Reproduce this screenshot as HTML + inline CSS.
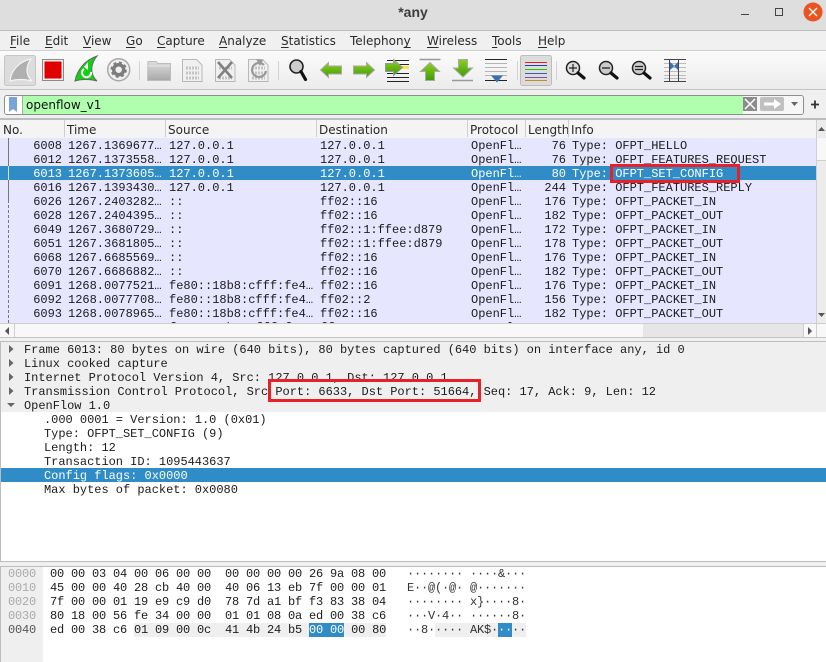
<!DOCTYPE html>
<html><head><meta charset="utf-8"><style>
html,body{margin:0;padding:0;width:826px;height:662px;overflow:hidden;background:#fff}
div,span{position:absolute;white-space:pre}
.m{font:12px/14px "Liberation Mono",monospace;color:#1c1c1c}
.s{font:12px/16px "DejaVu Sans",sans-serif;color:#2a2a2a}
u{text-underline-offset:2px}
.r{left:0;width:816px;height:14px;background:#e7e6ff;overflow:hidden}
.r span{top:1px}
.n{right:754px}.l{right:250px}
.t{left:68px}.a{left:169px}.b{left:320px}.p{left:471px}.i{left:572px}
.sel{background:#308cc6}.sel span{color:#fff}
.d{left:24px;height:14px;letter-spacing:-.02px;margin-top:1px}
.h{left:50px;letter-spacing:-.2px}
.o{left:8px;letter-spacing:-.2px;color:#aaa}
.c{left:407px;letter-spacing:-.2px;color:#333}
.hd{top:122px}
.sp{top:120px;width:1px;height:17px;background:#cfcfcf}
</style></head><body>
<!-- title bar -->
<div style="left:0;top:0;width:826px;height:30px;background:#dedede"></div>
<div style="left:0;top:30px;width:826px;height:1px;background:#bdbdbd"></div>
<div style="left:0;top:3px;width:826px;text-align:center;font:bold 14px/18px 'Liberation Sans',sans-serif;color:#3c3c3c">*any</div>
<svg style="position:absolute;left:730px;top:0" width="96" height="30"><path d="M11 14.500h8" stroke="#444" stroke-width="1"/><rect x="45.500" y="8.500" width="7" height="7" fill="none" stroke="#444"/><circle cx="83" cy="12" r="9.500" fill="#e95420"/><path d="M79 8l8 8M87 8l-8 8" stroke="#fff" stroke-width="1.300"/></svg>
<!-- menu -->
<div style="left:0;top:31px;width:826px;height:19px;background:#f0f0f0"></div>
<div style="left:0;top:50px;width:826px;height:1px;background:#d0d0d0"></div>
<div class="s" style="left:10px;top:33px"><u>F</u>ile</div>
<div class="s" style="left:45px;top:33px"><u>E</u>dit</div>
<div class="s" style="left:83px;top:33px"><u>V</u>iew</div>
<div class="s" style="left:126px;top:33px"><u>G</u>o</div>
<div class="s" style="left:157px;top:33px"><u>C</u>apture</div>
<div class="s" style="left:219px;top:33px"><u>A</u>nalyze</div>
<div class="s" style="left:281px;top:33px"><u>S</u>tatistics</div>
<div class="s" style="left:350px;top:33px">Telephon<u>y</u></div>
<div class="s" style="left:427px;top:33px"><u>W</u>ireless</div>
<div class="s" style="left:492px;top:33px"><u>T</u>ools</div>
<div class="s" style="left:538px;top:33px"><u>H</u>elp</div>
<!-- toolbar -->
<div style="left:0;top:51px;width:826px;height:38px;background:linear-gradient(#fbfbfb,#ececec)"></div>
<div style="left:0;top:89px;width:826px;height:1px;background:#c4c4c4"></div>
<svg style="position:absolute;left:0;top:51px" width="826" height="39" viewBox="0 51 826 39">
<defs>
<linearGradient id="g" x1="0" y1="0" x2="0" y2="1"><stop offset="0" stop-color="#8fd020"/><stop offset="1" stop-color="#3f9a08"/></linearGradient>
<linearGradient id="f" x1="0" y1="0" x2="0" y2="1"><stop offset="0" stop-color="#dcdcdc"/><stop offset="1" stop-color="#a8a8a8"/></linearGradient>
</defs>
<rect x="4.500" y="55.500" width="31" height="30" rx="2" fill="#dcdcdc" stroke="#c6c6c6"/>
<path d="M10 81C11 70 20 61 31 59C26 66 25 75 32 81C25 79 16 79 10 81Z" fill="#b0b0b0" stroke="#f4f4f4" stroke-width="1.200"/>
<rect x="42.500" y="59.500" width="21" height="21" fill="#eee" stroke="#8a8a8a"/>
<rect x="44.500" y="61.500" width="17" height="17" fill="#e00000"/>
<path d="M75 81C77 70 85 60 97 56C91 63 89 74 97 81C90 79 81 79 75 81Z" fill="#12d012" stroke="#666" stroke-width="1"/>
<path d="M91 72a4.500 4.500 0 1 1-7-3" fill="none" stroke="#fff" stroke-width="2"/><path d="M88 62v8l-4-3z" fill="#fff"/>
<circle cx="118.700" cy="69.700" r="11" fill="#f0f0f0" stroke="#a8a8a8" stroke-width="1.500"/>
<circle cx="118.700" cy="69.700" r="5" fill="none" stroke="#7c7c7c" stroke-width="3.500"/>
<circle cx="118.700" cy="69.700" r="7.200" fill="none" stroke="#7c7c7c" stroke-width="2" stroke-dasharray="3 2.650"/>
<path d="M139.500 61v19M278.500 61v19M517.500 61v19M556.500 61v19" stroke="#d2d2d2"/>
<path d="M148 61.500h8l2 2h12.500v17h-23z" fill="url(#f)" stroke="#bdbdbd"/><path d="M148 66h22" stroke="#e6e6e6"/>
<g fill="#f0f0f0" stroke="#b8b8b8"><path d="M182.500 59.500h14l5.500 5.500v16.500h-19.500z"/><path d="M215.500 59.500h14l5.500 5.500v16.500h-19.500z"/><path d="M248.500 59.500h14l5.500 5.500v16.500h-19.500z"/></g>
<g stroke="#c4c4c4" stroke-width="3" stroke-dasharray="2 1" fill="none"><path d="M186 68h13M186 73h13M186 78h13M219 68h13M219 78h13M252 68h13M252 73h13M252 78h13"/></g>
<path d="M218 62l14 16M232 62l-14 16" stroke="#808080" stroke-width="2.600"/>
<path d="M264 65a7 7 0 1 0 2 6" fill="none" stroke="#999" stroke-width="2.200"/><path d="M256 59l7 1-3 6z" fill="#999"/>
<circle cx="296.500" cy="66.500" r="6.500" fill="#ccc" stroke="#222" stroke-width="1.600"/>
<path d="M301 71.500l4.500 8" stroke="#111" stroke-width="3.200" stroke-linecap="round"/>
<path d="M320.500 70l8-7.500v3.500h13v8h-13v3.500z" fill="url(#g)" stroke="#aaa"/>
<path d="M374.500 70l-8-7.500v3.500h-13v8h13v3.500z" fill="url(#g)" stroke="#aaa"/>
<path d="M387 60.500h22M399 64.500h10M387 73.500h22M387 77.500h22M387 81.500h22" stroke="#222" stroke-width="1"/><path d="M402 66h7v3h-7z" fill="#fde04a"/>
<path d="M385.500 63.500h8v-4l9 8-9 8v-4h-8z" fill="url(#g)" stroke="#999"/>
<path d="M419.500 59.500h21" stroke="#999" stroke-width="1.500"/>
<path d="M430 62.500l9.500 9h-5v9h-9v-9h-5z" fill="url(#g)" stroke="#aaa"/>
<path d="M452 80.500h21" stroke="#999" stroke-width="1.500"/>
<path d="M463 77l9.500-9h-5v-8.500h-9v8.500h-5z" fill="url(#g)" stroke="#aaa"/>
<path d="M485 59.500h22" stroke="#222"/><path d="M485 63.500h22M485 67.500h22M485 71.500h22M485 75.500h22" stroke="#b4b4b4"/><path d="M485 80.500h22" stroke="#222"/>
<path d="M491 75.500h12l-6 7z" fill="#3c6fb4"/>
<rect x="520.500" y="55.500" width="31" height="30" rx="2" fill="#dcdcdc" stroke="#bdbdbd"/>
<path d="M525 62.500h22" stroke="#e02020"/><path d="M525 65.500h22" stroke="#2040c0"/><path d="M525 69.500h22" stroke="#30c000"/><path d="M525 73.500h22" stroke="#3060b0"/><path d="M525 77.500h22" stroke="#8a4aa0"/><path d="M525 80.500h22" stroke="#c09020"/>
<circle cx="573" cy="68" r="6.500" fill="#ddd" stroke="#222" stroke-width="1.500"/><path d="M578 73l6 5" stroke="#111" stroke-width="3.200" stroke-linecap="round"/>
<path d="M569 68h8M573 64v8" stroke="#222" stroke-width="1.200"/>
<circle cx="606" cy="68" r="6.500" fill="#ccc" stroke="#222" stroke-width="1.500"/><path d="M611 73l6 5" stroke="#111" stroke-width="3.200" stroke-linecap="round"/><path d="M602 68h8" stroke="#222" stroke-width="1.300"/>
<circle cx="639" cy="68" r="6.500" fill="#ccc" stroke="#222" stroke-width="1.500"/><path d="M644 73l6 5" stroke="#111" stroke-width="3.200" stroke-linecap="round"/><path d="M635 66.500h8M635 69.500h8" stroke="#222" stroke-width="1.200"/>
<path d="M664 59.500h22M664 81.500h22" stroke="#444"/><path d="M664 63.500h22M664 67.500h22M664 71.500h22M664 75.500h22M664 78.500h22" stroke="#bbb"/>
<path d="M669.500 59v22M678.500 59v22" stroke="#444"/>
<path d="M670 62l4.500 4-4.500 4zM678 62l-4 4 4 4z" fill="#3c6fb4"/>
</svg>
<!-- filter bar -->
<div style="left:0;top:90px;width:826px;height:28px;background:#f0f0f0"></div>
<div style="left:0;top:118px;width:826px;height:2px;background:#bdbdbd"></div>
<div style="left:4px;top:95px;width:798px;height:18px;background:#afffaf;border:1px solid #8e8e8e;border-radius:3px;overflow:hidden">
<div style="left:0;top:0;width:17px;height:18px;background:#fff;border-right:1px solid #aaa"></div>
<div style="left:738px;top:0;width:60px;height:18px;background:#f6f6f6"></div></div>
<svg style="position:absolute;left:8px;top:96px" width="12" height="17"><path d="M1 1h8v15l-4-3-4 3z" fill="#7aa4d8"/></svg>
<div class="s" style="left:26px;top:97px;color:#111">openflow_v1</div>
<svg style="position:absolute;left:742px;top:96px" width="84" height="18"><rect x="1" y="1" width="14" height="14" fill="#8c8c8c"/><path d="M3 3l10 10M13 3L3 13" stroke="#fff" stroke-width="1.500"/><rect x="18" y="1" width="24" height="14" rx="2" fill="#c0c0c0"/><path d="M22 6.500h10V3l7 5-7 5v-3.500H22z" fill="#fff"/><path d="M49 6h7l-3.500 4z" fill="#666"/><path d="M69 8.500h8M73 4.500v8" stroke="#333" stroke-width="1.800"/></svg>
<!-- packet list header -->
<div style="left:0;top:120px;width:816px;height:18px;background:#f4f4f4;border-bottom:0"></div>
<div class="sp" style="left:64px"></div><div class="sp" style="left:165px"></div><div class="sp" style="left:316px"></div><div class="sp" style="left:467px"></div><div class="sp" style="left:525px"></div><div class="sp" style="left:568px"></div>
<div class="s hd" style="left:3px">No.</div><div class="s hd" style="left:67px">Time</div><div class="s hd" style="left:168px">Source</div><div class="s hd" style="left:319px">Destination</div><div class="s hd" style="left:470px">Protocol</div><div class="s hd" style="left:528px;width:40px;overflow:hidden">Length</div><div class="s hd" style="left:571px">Info</div>
<!-- packet rows -->
<div style="left:0;top:138px;width:816px;height:185px;overflow:hidden;background:#e7e6ff">
<div class="r m" style="top:0"><span class="n">6008</span><span class="t">1267.1369677…</span><span class="a">127.0.0.1</span><span class="b">127.0.0.1</span><span class="p">OpenFl…</span><span class="l">76</span><span class="i">Type: OFPT_HELLO</span></div>
<div class="r m" style="top:14px"><span class="n">6012</span><span class="t">1267.1373558…</span><span class="a">127.0.0.1</span><span class="b">127.0.0.1</span><span class="p">OpenFl…</span><span class="l">76</span><span class="i">Type: OFPT_FEATURES_REQUEST</span></div>
<div class="r m sel" style="top:28px"><span class="n">6013</span><span class="t">1267.1373605…</span><span class="a">127.0.0.1</span><span class="b">127.0.0.1</span><span class="p">OpenFl…</span><span class="l">80</span><span class="i">Type: OFPT_SET_CONFIG</span></div>
<div class="r m" style="top:42px"><span class="n">6016</span><span class="t">1267.1393430…</span><span class="a">127.0.0.1</span><span class="b">127.0.0.1</span><span class="p">OpenFl…</span><span class="l">244</span><span class="i">Type: OFPT_FEATURES_REPLY</span></div>
<div class="r m" style="top:56px"><span class="n">6026</span><span class="t">1267.2403282…</span><span class="a">::</span><span class="b">ff02::16</span><span class="p">OpenFl…</span><span class="l">176</span><span class="i">Type: OFPT_PACKET_IN</span></div>
<div class="r m" style="top:70px"><span class="n">6028</span><span class="t">1267.2404395…</span><span class="a">::</span><span class="b">ff02::16</span><span class="p">OpenFl…</span><span class="l">182</span><span class="i">Type: OFPT_PACKET_OUT</span></div>
<div class="r m" style="top:84px"><span class="n">6049</span><span class="t">1267.3680729…</span><span class="a">::</span><span class="b">ff02::1:ffee:d879</span><span class="p">OpenFl…</span><span class="l">172</span><span class="i">Type: OFPT_PACKET_IN</span></div>
<div class="r m" style="top:98px"><span class="n">6051</span><span class="t">1267.3681805…</span><span class="a">::</span><span class="b">ff02::1:ffee:d879</span><span class="p">OpenFl…</span><span class="l">178</span><span class="i">Type: OFPT_PACKET_OUT</span></div>
<div class="r m" style="top:112px"><span class="n">6068</span><span class="t">1267.6685569…</span><span class="a">::</span><span class="b">ff02::16</span><span class="p">OpenFl…</span><span class="l">176</span><span class="i">Type: OFPT_PACKET_IN</span></div>
<div class="r m" style="top:126px"><span class="n">6070</span><span class="t">1267.6686882…</span><span class="a">::</span><span class="b">ff02::16</span><span class="p">OpenFl…</span><span class="l">182</span><span class="i">Type: OFPT_PACKET_OUT</span></div>
<div class="r m" style="top:140px"><span class="n">6091</span><span class="t">1268.0077521…</span><span class="a">fe80::18b8:cfff:fe4…</span><span class="b">ff02::16</span><span class="p">OpenFl…</span><span class="l">176</span><span class="i">Type: OFPT_PACKET_IN</span></div>
<div class="r m" style="top:154px"><span class="n">6092</span><span class="t">1268.0077708…</span><span class="a">fe80::18b8:cfff:fe4…</span><span class="b">ff02::2</span><span class="p">OpenFl…</span><span class="l">156</span><span class="i">Type: OFPT_PACKET_IN</span></div>
<div class="r m" style="top:168px"><span class="n">6093</span><span class="t">1268.0078965…</span><span class="a">fe80::18b8:cfff:fe4…</span><span class="b">ff02::16</span><span class="p">OpenFl…</span><span class="l">182</span><span class="i">Type: OFPT_PACKET_OUT</span></div>
<div class="r m" style="top:182px"><span class="n">6095</span><span class="t">1268.0079463…</span><span class="a">fe80::18b8:cfff:fe4…</span><span class="b">ff02::2</span><span class="p">OpenFl…</span><span class="l">182</span><span class="i">Type: OFPT_PACKET_OUT</span></div>
</div>
<div style="left:8px;top:138px;width:1px;height:62px;background:#777"></div>
<div style="left:8px;top:166px;width:1px;height:14px;background:#cfe4f3"></div>
<div style="left:8px;top:200px;width:0;height:123px;border-left:1px dashed #777"></div>
<!-- v scrollbar -->
<div style="left:816px;top:120px;width:10px;height:203px;background:#ececec;border-left:1px solid #cfcfcf;box-sizing:border-box"></div>
<div style="left:817px;top:138px;width:9px;height:22px;background:#f7f7f7;border-bottom:1px solid #cfcfcf"></div>
<svg style="position:absolute;left:816px;top:124px" width="10" height="196"><path d="M2 7h7L5.500 3z" fill="#555"/><path d="M2 189h7l-3.500 4z" fill="#555"/></svg>
<!-- h scrollbar -->
<div style="left:0;top:323px;width:826px;height:14px;background:#f8f8f8;border-top:1px solid #cfcfcf;box-sizing:border-box"></div>
<div style="left:643px;top:324px;width:160px;height:13px;background:#e6e6e6"></div>
<div style="left:14px;top:324px;width:1px;height:13px;background:#cfcfcf"></div>
<div style="left:803px;top:324px;width:1px;height:13px;background:#cfcfcf"></div>
<div style="left:816px;top:324px;width:1px;height:13px;background:#cfcfcf"></div>
<svg style="position:absolute;left:0;top:324px" width="826" height="13"><path d="M9 3v8L5 7z" fill="#555"/><path d="M808 3v8l4-4z" fill="#555"/></svg>
<!-- sash -->
<div style="left:0;top:337px;width:826px;height:5px;background:#f0f0f0;border-bottom:1px solid #bdbdbd;box-sizing:border-box"></div>
<div style="left:0;top:337px;width:826px;height:1px;background:#c4c4c4"></div>
<!-- details -->
<div style="left:0;top:342px;width:826px;height:70px;background:#efefef"></div>
<div style="left:0;top:412px;width:826px;height:149px;background:#fff"></div>
<div style="left:0;top:342px;width:1px;height:219px;background:#bdbdbd"></div>
<div style="left:1px;top:468px;width:825px;height:14px;background:#308cc6"></div>
<div class="m d" style="top:342px">Frame 6013: 80 bytes on wire (640 bits), 80 bytes captured (640 bits) on interface any, id 0</div>
<div class="m d" style="top:356px">Linux cooked capture</div>
<div class="m d" style="top:370px">Internet Protocol Version 4, Src: 127.0.0.1, Dst: 127.0.0.1</div>
<div class="m d" style="top:384px">Transmission Control Protocol, Src Port: 6633, Dst Port: 51664, Seq: 17, Ack: 9, Len: 12</div>
<div class="m d" style="top:398px">OpenFlow 1.0</div>
<div class="m d" style="top:412px;left:44px">.000 0001 = Version: 1.0 (0x01)</div>
<div class="m d" style="top:426px;left:44px">Type: OFPT_SET_CONFIG (9)</div>
<div class="m d" style="top:440px;left:44px">Length: 12</div>
<div class="m d" style="top:454px;left:44px">Transaction ID: 1095443637</div>
<div class="m d" style="top:468px;left:44px;color:#fff">Config flags: 0x0000</div>
<div class="m d" style="top:482px;left:44px">Max bytes of packet: 0x0080</div>
<svg style="position:absolute;left:0;top:342px" width="20" height="70"><path d="M9 3v8l4.500-4zM9 17v8l4.500-4zM9 31v8l4.500-4zM9 45v8l4.500-4z" fill="#666"/><path d="M7 61h8l-4 4z" fill="#666"/></svg>
<!-- red boxes -->
<div style="left:610px;top:164px;width:130px;height:19px;border:3px solid #e8202a;box-sizing:border-box"></div>
<div style="left:268px;top:379px;width:213px;height:23px;border:3px solid #e8202a;box-sizing:border-box"></div>
<!-- sash 2 -->
<div style="left:0;top:561px;width:826px;height:6px;background:#f0f0f0;border-top:1px solid #bdbdbd;border-bottom:1px solid #bdbdbd;box-sizing:border-box"></div>
<!-- hex -->
<div style="left:0;top:567px;width:43px;height:95px;background:#efefef"></div>
<div style="left:0;top:567px;width:1px;height:95px;background:#bdbdbd"></div>
<div style="left:134px;top:623px;width:252px;height:14px;background:#efefef"></div>
<div style="left:309px;top:623px;width:35px;height:14px;background:#308cc6"></div>
<div style="left:435px;top:623px;width:91px;height:14px;background:#efefef"></div>
<div style="left:498px;top:623px;width:14px;height:14px;background:#308cc6"></div>
<div class="m o" style="top:567px">0000</div><div class="m o" style="top:581px">0010</div><div class="m o" style="top:595px">0020</div><div class="m o" style="top:609px">0030</div><div class="m o" style="top:623px;color:#555">0040</div>
<div class="m h" style="top:567px">00 00 03 04 00 06 00 00  00 00 00 00 26 9a 08 00</div>
<div class="m h" style="top:581px">45 00 00 40 28 cb 40 00  40 06 13 eb 7f 00 00 01</div>
<div class="m h" style="top:595px">7f 00 00 01 19 e9 c9 d0  78 7d a1 bf f3 83 38 04</div>
<div class="m h" style="top:609px">80 18 00 56 fe 34 00 00  01 01 08 0a ed 00 38 c6</div>
<div class="m h" style="top:623px">ed 00 38 c6 01 09 00 0c  41 4b 24 b5 <span style="position:static;color:#fff">00 00</span> 00 80</div>
<div class="m c" style="top:567px">········ ····&amp;···</div>
<div class="m c" style="top:581px">E··@(·@· @·······</div>
<div class="m c" style="top:595px">········ x}····8·</div>
<div class="m c" style="top:609px">···V·4·· ······8·</div>
<div class="m c" style="top:623px">··8····· AK$·<span style="position:static;color:#fff">··</span>··</div>
</body></html>
